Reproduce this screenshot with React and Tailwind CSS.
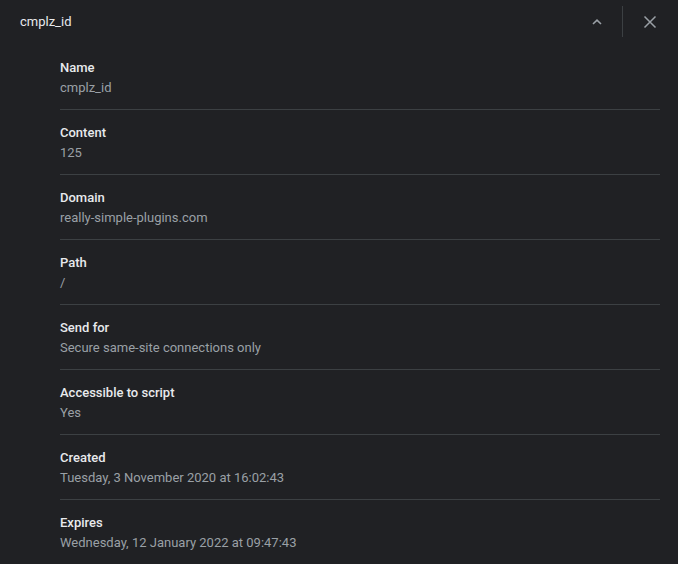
import React from "react";

const rows = [
  ["Name", "cmplz_id"],
  ["Content", "125"],
  ["Domain", "really-simple-plugins.com"],
  ["Path", "/"],
  ["Send for", "Secure same-site connections only"],
  ["Accessible to script", "Yes"],
  ["Created", "Tuesday, 3 November 2020 at 16:02:43"],
  ["Expires", "Wednesday, 12 January 2022 at 09:47:43"],
];

export default function App() {
  return (
    <div
      className="w-[678px] h-[564px] bg-[#202124] overflow-hidden text-[13px]"
      style={{ fontFamily: "Roboto, 'Liberation Sans', sans-serif" }}
    >
      <div className="h-[43px] flex items-center pl-5 pr-[12px]">
        <div className="flex-1 text-[#e8eaed] leading-5">cmplz_id</div>
        <button className="w-[32px] h-[32px] flex items-center justify-center">
          <svg width="12" height="8" viewBox="0 0 12 8" fill="none">
            <path d="M2 6 L6 2.2 L10 6" stroke="#9aa0a6" strokeWidth="1.6" />
          </svg>
        </button>
        <div className="w-px h-[31px] bg-[#3c4043] ml-[9px] mr-[11px]" />
        <button className="w-[32px] h-[32px] flex items-center justify-center">
          <svg width="14" height="14" viewBox="0 0 14 14" fill="none">
            <path d="M1.5 1.5 L12.5 12.5 M12.5 1.5 L1.5 12.5" stroke="#9aa0a6" strokeWidth="1.5" />
          </svg>
        </button>
      </div>
      <div className="pl-[60px] pr-[18px] pt-[2px]">
        {rows.map(([label, value], i) => (
          <div
            key={label}
            className={
              "pt-[13px] pb-[11px] " +
              (i < rows.length - 1 ? "border-b border-[#3c4043]" : "")
            }
          >
            <div className="leading-5 text-[#e8eaed] font-medium">{label}</div>
            <div className="leading-5 text-[#9aa0a6]">{value}</div>
          </div>
        ))}
      </div>
    </div>
  );
}
